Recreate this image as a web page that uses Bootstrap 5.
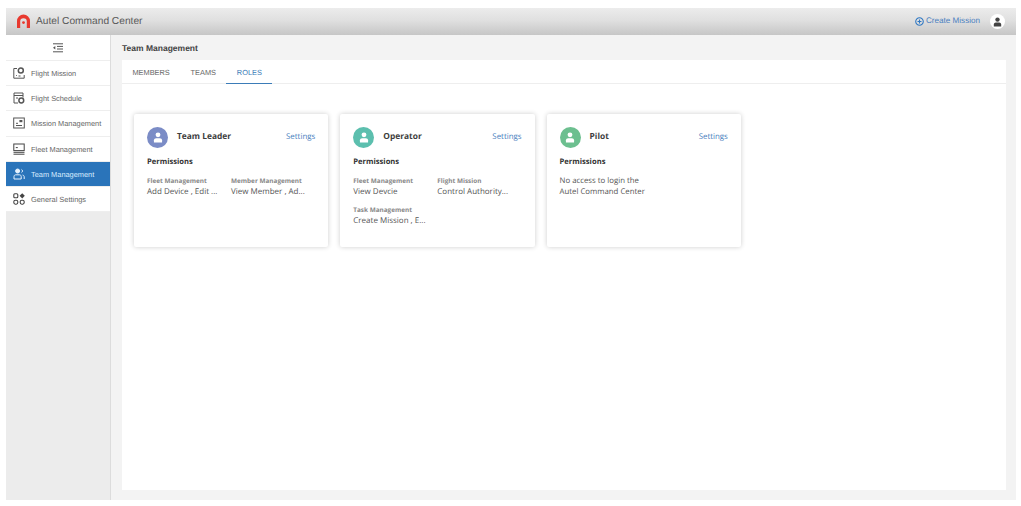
<!DOCTYPE html>
<html lang="en">
<head>
<meta charset="utf-8">
<title>Autel Command Center</title>
<link rel="stylesheet" href="https://cdn.jsdelivr.net/npm/bootstrap@5.3.0/dist/css/bootstrap.min.css">
<style>
html,body{height:100%;background:#fff;overflow:hidden}
body{font-family:"Liberation Sans",Arial,sans-serif;color:#333;padding:8px 5px 6px 6px;text-rendering:geometricPrecision}
.app-shell{height:492px}
.top-bar{height:27px;background:linear-gradient(180deg,#ececec 0%,#e0e0e0 45%,#c6c6c6 100%);padding:0 11px 0 10px}
.brand-name{font-size:10.2px;color:#5a5a5a;margin-left:5px;font-family:"Liberation Sans",sans-serif}
.create-link{font-size:8.1px;color:#4a7fc0;text-decoration:none;margin-right:10px;gap:2px}
.avatar-top{width:15px;height:15px;border-radius:50%;background:#fff}
.side-col{width:105px;background:#ececec;border-right:1px solid #dcdcdc}
.side-toggle{height:26px;background:#fff;border-bottom:1px solid #eee}
.side-item{height:25.2px;background:#fff;border-bottom:1px solid #eee;padding-left:7px;font-size:7.4px;color:#666;text-decoration:none}
.side-item span{margin-left:6px;padding-top:1px}
.side-item.is-on{background:#2a74ba;color:#d8ecff}
.main-col{background:#f3f3f3;padding:0 10px 10px 11px;min-width:0}
.page-title{height:25px;padding-top:2px;font-size:8.5px;font-weight:700;color:#444}
.panel-white{background:#fff;min-height:0}
.tabs-row{height:24px;border-bottom:1px solid #eee}
.tab-link{font-size:7.4px;color:#666;padding:2px 10.4px 0;height:24px;text-decoration:none}
.tab-link.is-on{color:#3b7cb8;border-bottom:1px solid #3b7cb8}
.roles-row{padding:30px 0 0 12px;gap:12px}
.role-box{width:194.3px;height:133px;background:#fff;box-shadow:0 0 5px rgba(0,0,0,.2);padding:12px 13px 0 13px;border-radius:2px}
.role-head{height:21px;padding-top:1px}
.role-dot{width:21px;height:21px;border-radius:50%;flex:none}
.role-name{font-size:8.4px;font-weight:700;color:#3d3d3d;margin-left:9px;padding-top:1px;font-family:"Open Sans","Liberation Sans",sans-serif}
.role-set{font-size:7.9px;color:#4a7fc0;text-decoration:none;margin-left:auto;padding-top:2px;font-family:"Open Sans","Liberation Sans",sans-serif}
.perm-title{font-size:7.6px;font-weight:700;color:#333;margin-top:10px;line-height:11px;font-family:"Open Sans","Liberation Sans",sans-serif}
.perm-grid{display:grid;grid-template-columns:84px 84px;row-gap:7px;margin-top:8px}
.perm-label{font-size:6.4px;font-weight:700;color:#888;line-height:9px;white-space:nowrap;font-family:"Open Sans","Liberation Sans",sans-serif}
.perm-value{font-size:8px;color:#555;line-height:12px;margin-top:1px;white-space:nowrap;font-family:"Open Sans","Liberation Sans",sans-serif}
.perm-note{font-size:7.8px;color:#555;line-height:11px;margin-top:8px;font-family:"Open Sans","Liberation Sans",sans-serif}
</style>
</head>
<body>
<div class="app-shell d-flex flex-column">
  <header class="top-bar d-flex align-items-center flex-shrink-0">
    <svg width="15" height="15" viewBox="0 0 15 15"><path d="M1 14V7a6.5 6.5 0 0 1 13 0v7h-3.2V7.5a3.3 3.3 0 0 0-6.6 0V14z" fill="#e8392f"/><circle cx="7.5" cy="8.6" r="1.4" fill="#e8392f"/></svg>
    <span class="brand-name">Autel Command Center</span>
    <a href="#" class="create-link ms-auto d-flex align-items-center">
      <svg width="9" height="9" viewBox="0 0 10 10" fill="none" stroke="#2f78c4" stroke-width="1.2"><circle cx="5" cy="5" r="4.2"/><path d="M2.8 5h4.4M5 2.8v4.4"/></svg>Create Mission</a>
    <span class="avatar-top d-flex align-items-center justify-content-center">
      <svg width="9" height="10" viewBox="0 0 9 10" fill="#444"><circle cx="4.5" cy="2.6" r="2.2"/><path d="M.8 9.5V7.6c0-1.3 1-2 2-2h3.4c1 0 2 .7 2 2v1.9z"/></svg>
    </span>
  </header>
  <div class="d-flex flex-grow-1" style="min-height:0">
    <nav class="side-col flex-shrink-0">
      <div class="side-toggle d-flex align-items-center justify-content-center">
        <svg width="12" height="10" viewBox="0 0 12 10" fill="none" stroke="#555" stroke-width="1"><path d="M1 .8h10M5 3.4h6M5 6h6M1 8.8h10"/><path d="M3.3 3L1 4.7l2.3 1.7z" fill="#555" stroke="none"/></svg>
      </div>
      <a href="#" class="side-item d-flex align-items-center">
        <svg width="12" height="12" viewBox="0 0 12 12" fill="none" stroke="#555" stroke-width="1"><path d="M4 1.5H.8v9.7h10.4V8"/><circle cx="7.8" cy="3.6" r="2.5" stroke-width="1.5"/><path d="M3 8.5h.8M5.5 9h2" stroke-width="1.2"/></svg>
        <span>Flight Mission</span></a>
      <a href="#" class="side-item d-flex align-items-center">
        <svg width="12" height="12" viewBox="0 0 12 12" fill="none" stroke="#555" stroke-width="1"><path d="M5 11H1V1h9v4.5M1 3.5h9M3 6h2"/><circle cx="8.3" cy="8.5" r="2.4" stroke-width="1.5"/></svg>
        <span>Flight Schedule</span></a>
      <a href="#" class="side-item d-flex align-items-center">
        <svg width="12" height="12" viewBox="0 0 12 12" fill="none" stroke="#555" stroke-width="1"><rect x=".7" y="1" width="10.6" height="10"/><path d="M3 8.5h6M3 6.3h2"/><rect x="6.4" y="3" width="3" height="2.2" fill="#555" stroke="none"/></svg>
        <span>Mission Management</span></a>
      <a href="#" class="side-item d-flex align-items-center">
        <svg width="12" height="12" viewBox="0 0 12 12" fill="none" stroke="#444" stroke-width="1"><rect x=".8" y="1" width="10.4" height="6.6"/><path d="M.5 9.3h11M.5 11.2h11M2.8 4.6h2"/></svg>
        <span>Fleet Management</span></a>
      <a href="#" class="side-item is-on d-flex align-items-center">
        <svg width="12" height="12" viewBox="0 0 12 12" fill="none" stroke="#e6f2ff" stroke-width="1"><circle cx="4.6" cy="3" r="2" fill="#e6f2ff"/><path d="M1 11V8.5c0-1 .8-1.7 1.7-1.7h3.8c1 0 1.7.7 1.7 1.7V11z"/><path d="M8.5 1.4a1.8 1.8 0 0 1 0 3.2M9.6 7c.9.2 1.6.9 1.6 1.8V11"/></svg>
        <span>Team Management</span></a>
      <a href="#" class="side-item d-flex align-items-center">
        <svg width="12" height="12" viewBox="0 0 12 12" fill="none" stroke="#444" stroke-width="1.1"><rect x=".8" y=".8" width="4" height="4" rx="1"/><path d="M9.2.2l2.6 2.6-2.6 2.6-2.6-2.6z" fill="#444" stroke="none"/><rect x=".8" y="7.2" width="4" height="4" rx="1.6"/><rect x="7.2" y="7.2" width="4" height="4" rx="1.6"/></svg>
        <span>General Settings</span></a>
    </nav>
    <main class="main-col flex-grow-1 d-flex flex-column">
      <div class="page-title d-flex align-items-center flex-shrink-0">Team Management</div>
      <section class="panel-white flex-grow-1 d-flex flex-column">
        <div class="tabs-row d-flex flex-shrink-0">
          <a href="#" class="tab-link d-flex align-items-center">MEMBERS</a>
          <a href="#" class="tab-link d-flex align-items-center">TEAMS</a>
          <a href="#" class="tab-link is-on d-flex align-items-center">ROLES</a>
        </div>
        <div class="roles-row d-flex align-items-start">
          <article class="role-box">
            <div class="role-head d-flex align-items-center">
              <span class="role-dot d-flex align-items-center justify-content-center" style="background:#7b8cc6"><svg width="10" height="11" viewBox="0 0 9 10" fill="#fff"><circle cx="4.5" cy="2.6" r="2.2"/><path d="M.8 9.5V7.6c0-1.3 1-2 2-2h3.4c1 0 2 .7 2 2v1.9z"/></svg></span>
              <span class="role-name">Team Leader</span>
              <a href="#" class="role-set">Settings</a>
            </div>
            <div class="perm-title">Permissions</div>
            <div class="perm-grid">
              <div><div class="perm-label">Fleet Management</div><div class="perm-value">Add Device , Edit ...</div></div>
              <div><div class="perm-label">Member Management</div><div class="perm-value">View Member , Ad...</div></div>
            </div>
          </article>
          <article class="role-box">
            <div class="role-head d-flex align-items-center">
              <span class="role-dot d-flex align-items-center justify-content-center" style="background:#5cbfae"><svg width="10" height="11" viewBox="0 0 9 10" fill="#fff"><circle cx="4.5" cy="2.6" r="2.2"/><path d="M.8 9.5V7.6c0-1.3 1-2 2-2h3.4c1 0 2 .7 2 2v1.9z"/></svg></span>
              <span class="role-name">Operator</span>
              <a href="#" class="role-set">Settings</a>
            </div>
            <div class="perm-title">Permissions</div>
            <div class="perm-grid">
              <div><div class="perm-label">Fleet Management</div><div class="perm-value">View Devcie</div></div>
              <div><div class="perm-label">Flight Mission</div><div class="perm-value">Control Authority...</div></div>
              <div><div class="perm-label">Task Management</div><div class="perm-value">Create Mission , E...</div></div>
            </div>
          </article>
          <article class="role-box">
            <div class="role-head d-flex align-items-center">
              <span class="role-dot d-flex align-items-center justify-content-center" style="background:#6cbf8f"><svg width="10" height="11" viewBox="0 0 9 10" fill="#fff"><circle cx="4.5" cy="2.6" r="2.2"/><path d="M.8 9.5V7.6c0-1.3 1-2 2-2h3.4c1 0 2 .7 2 2v1.9z"/></svg></span>
              <span class="role-name">Pilot</span>
              <a href="#" class="role-set">Settings</a>
            </div>
            <div class="perm-title">Permissions</div>
            <div class="perm-note">No access to login the<br>Autel Command Center</div>
          </article>
        </div>
      </section>
    </main>
  </div>
</div>
<script src="https://cdn.jsdelivr.net/npm/bootstrap@5.3.0/dist/js/bootstrap.bundle.min.js"></script>
</body>
</html>
